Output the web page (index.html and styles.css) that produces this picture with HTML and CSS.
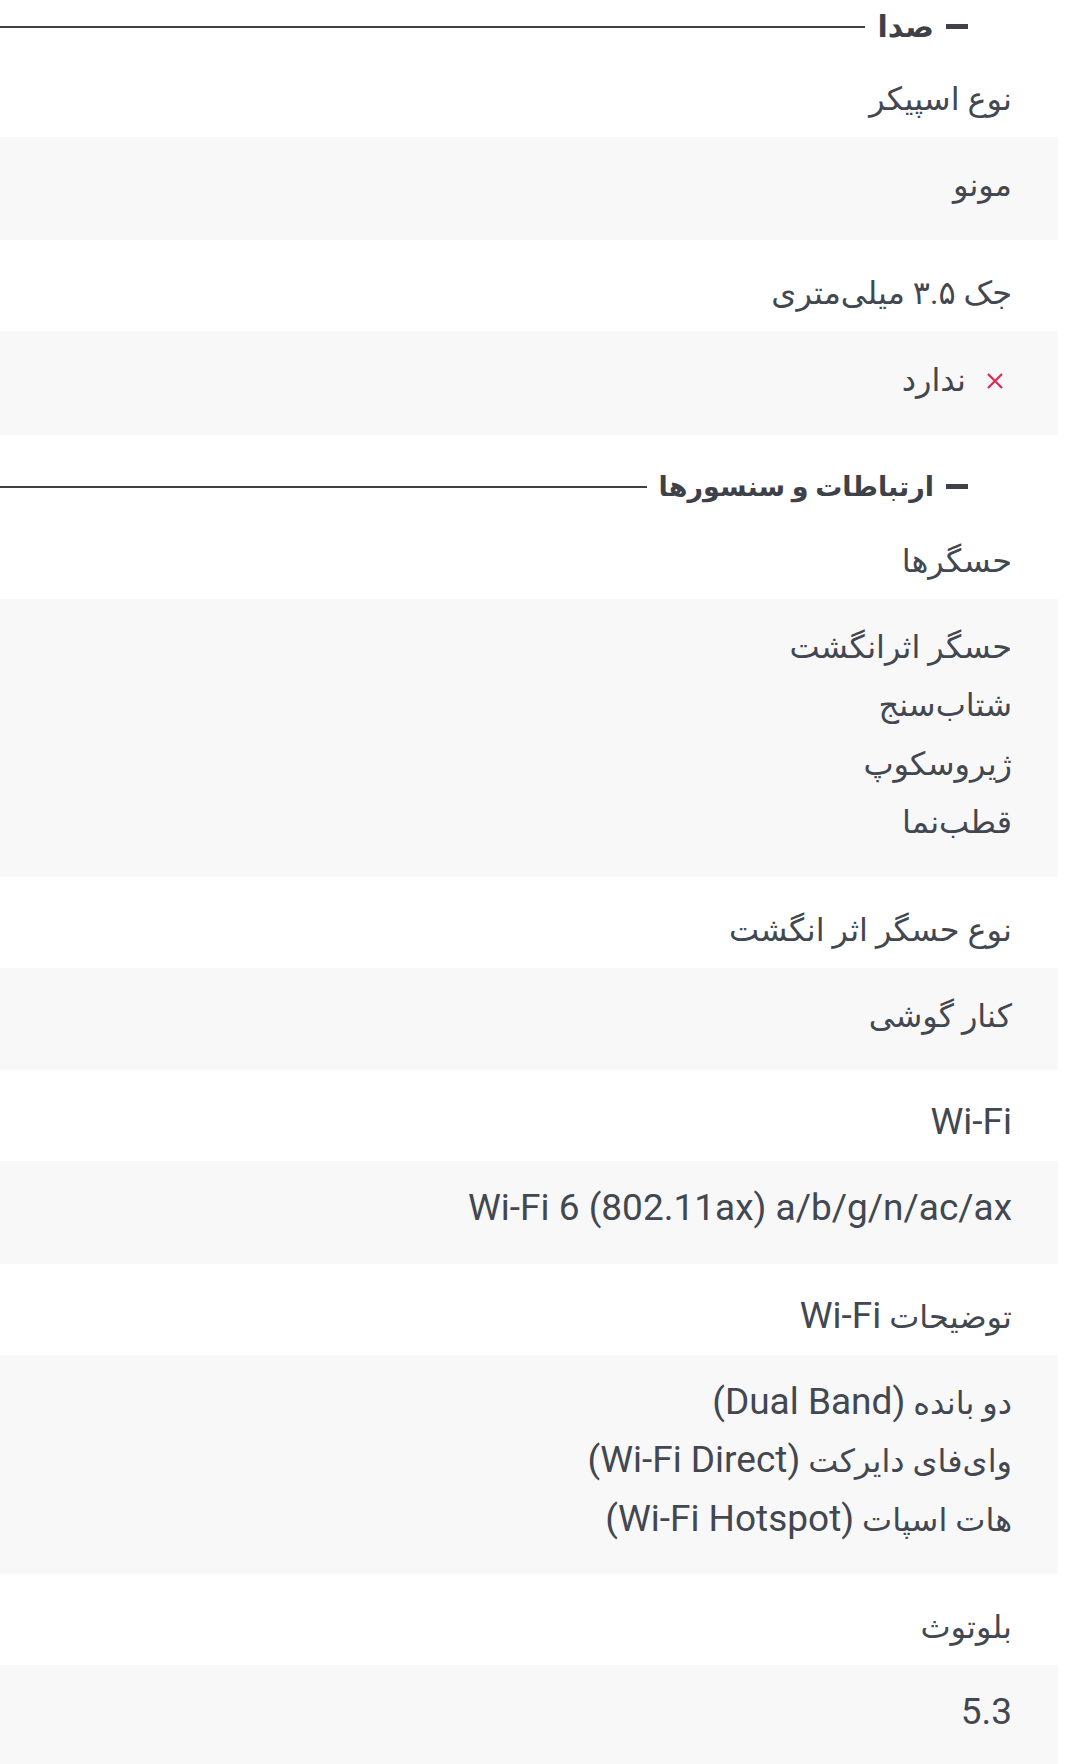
FILE: index.html
```html
<!DOCTYPE html>
<html lang="fa" dir="rtl">
<head>
    <meta charset="UTF-8">
    <meta name="viewport" content="width=device-width, initial-scale=1.0">
    <title>مشخصات</title>
    <link rel="stylesheet" href="styles.css">
</head>
<body>
    <div class="specs">
        <section class="group">
            <h3 class="group-title">
                <span class="dash"></span>
                <span class="title-text">صدا</span>
                <span class="rule"></span>
            </h3>
            <div class="spec">
                <div class="spec-label">نوع اسپیکر</div>
                <div class="spec-value">مونو</div>
            </div>
            <div class="spec">
                <div class="spec-label">جک ۳.۵ میلی‌متری</div>
                <div class="spec-value">
                    <span class="no-item">
                        <svg class="x-icon" width="18" height="18" viewBox="0 0 18 18">
                            <path d="M2 2 L16 16 M16 2 L2 16" stroke="currentColor" stroke-width="2.2" fill="none"/>
                        </svg>
                        ندارد
                    </span>
                </div>
            </div>
        </section>

        <section class="group">
            <h3 class="group-title">
                <span class="dash"></span>
                <span class="title-text">ارتباطات و سنسورها</span>
                <span class="rule"></span>
            </h3>
            <div class="spec">
                <div class="spec-label">حسگرها</div>
                <div class="spec-value">
                    حسگر اثرانگشت<br>
                    شتاب‌سنج<br>
                    ژیروسکوپ<br>
                    قطب‌نما
                </div>
            </div>
            <div class="spec">
                <div class="spec-label">نوع حسگر اثر انگشت</div>
                <div class="spec-value">کنار گوشی</div>
            </div>
            <div class="spec">
                <div class="spec-label"><span class="en" lang="en">Wi-Fi</span></div>
                <div class="spec-value"><span class="en" lang="en">Wi-Fi 6 (802.11ax) a/b/g/n/ac/ax</span></div>
            </div>
            <div class="spec">
                <div class="spec-label">توضیحات <span class="en" lang="en">Wi-Fi</span></div>
                <div class="spec-value">
                    دو بانده <span class="en" lang="en">(Dual Band)</span><br>
                    وای‌فای دایرکت <span class="en" lang="en">(Wi-Fi Direct)</span><br>
                    هات اسپات <span class="en" lang="en">(Wi-Fi Hotspot)</span>
                </div>
            </div>
            <div class="spec">
                <div class="spec-label">بلوتوث</div>
                <div class="spec-value"><span class="en" lang="en">5.3</span></div>
            </div>
        </section>
    </div>
</body>
</html>
```

FILE: styles.css
```css
body {
    margin: 0;
    padding: 0;
    background-color: #fff;
    color: #424750;
    font-family: Roboto, "DejaVu Sans", sans-serif;
    font-size: 32px;
    overflow: hidden;
}

.specs {
    margin-right: 22px;
}

.en {
    font-size: 37px;
    line-height: 1;
}

.group-title {
    display: flex;
    align-items: center;
    gap: 12px;
    margin: 0;
    padding: 31px 90px 0 0;
    height: 42px;
    line-height: 42px;
    font-size: 27px;
    font-weight: bold;
    color: #3f4148;
}

.group:first-child .group-title {
    padding-top: 7px;
    height: 39px;
}

.group:first-child .title-text {
    font-size: 30px;
}

.dash {
    width: 22px;
    height: 5px;
    background-color: #3f4148;
    flex-shrink: 0;
}

.title-text {
    white-space: nowrap;
}

.rule {
    flex: 1;
    height: 2px;
    background-color: #3f4148;
}

.spec-label {
    padding: 24px 46px 9px 0;
    line-height: 58px;
}

.spec-value {
    background-color: #f8f8f8;
    padding: 19px 46px 25px 0;
    line-height: 58.5px;
}

.no-item {
    display: inline-flex;
    align-items: center;
    gap: 20px;
}

.x-icon {
    color: #e0284f;
    margin-right: 8px;
}
```
